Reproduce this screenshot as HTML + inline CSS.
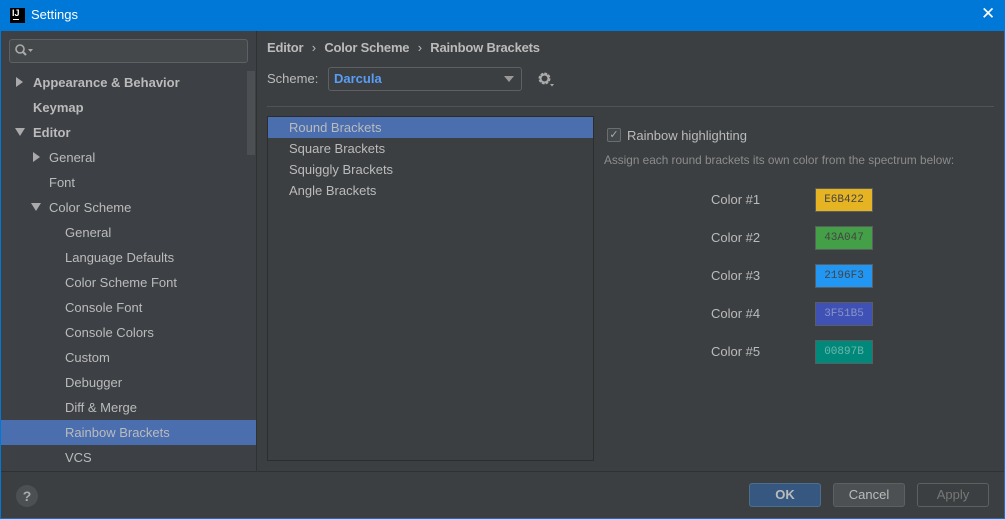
<!DOCTYPE html>
<html><head><style>
*{margin:0;padding:0;box-sizing:border-box}
body{width:1005px;height:519px;overflow:hidden;background:#0078d7;font-family:"Liberation Sans",sans-serif;font-size:13px;color:#bbbbbb;position:relative}
.a{position:absolute}
.row{position:absolute;left:1px;width:255px;height:25px;line-height:25px;white-space:nowrap}
.b{font-weight:bold}
.tri{position:absolute;width:0;height:0}
.tr{border-top:5px solid transparent;border-bottom:5px solid transparent;border-left:7px solid #aaa}
.td{border-left:5px solid transparent;border-right:5px solid transparent;border-top:8px solid #aaa}
.sw{position:absolute;left:815px;width:58px;height:24px;border:1px solid #5a5d60;font-family:"Liberation Mono",monospace;font-size:11px;text-align:center;line-height:22px;color:#444}
.cl{position:absolute;left:711px;font-size:13px}
.btn{position:absolute;top:483px;height:24px;border-radius:3px;text-align:center;line-height:22px;font-size:13px}
</style></head><body>
<div class="a" style="left:0;top:0;width:1005px;height:31px;background:#0078d7"></div>
<div class="a" style="left:10px;top:8px;width:15px;height:15px;background:#000"><div class="a" style="left:2px;top:0;color:#fff;font-size:9px;font-weight:bold">IJ</div><div class="a" style="left:3px;top:11px;width:6px;height:1px;background:#fff"></div></div>
<div class="a" style="left:31px;top:7px;color:#fff;font-size:13px">Settings</div>
<div class="a" style="left:981px;top:4px;color:#fff;font-size:17px">✕</div>
<div class="a" style="left:1px;top:31px;width:255px;height:440px;background:#3d4044"></div>
<div class="a" style="left:256px;top:31px;width:1px;height:440px;background:#2f3133"></div>
<div class="a" style="left:257px;top:31px;width:747px;height:440px;background:#3c3f41"></div>
<div class="a" style="left:9px;top:39px;width:239px;height:24px;border:1px solid #5e6163;border-radius:3px;background:#45484a"></div>
<svg class="a" style="left:14px;top:43px" width="20" height="16"><circle cx="6" cy="6" r="4" fill="none" stroke="#aaa" stroke-width="1.6"/><line x1="9" y1="9" x2="12" y2="12" stroke="#aaa" stroke-width="2"/><path d="M14 6h5l-2.5 3z" fill="#aaa"/></svg>
<div class="a" style="left:247px;top:71px;width:8px;height:84px;background:#4d5053"></div>
<div class="row b" style="top:70px;padding-left:32px">Appearance &amp; Behavior</div><div class="tri tr" style="left:16px;top:77px"></div>
<div class="row b" style="top:95px;padding-left:32px">Keymap</div>
<div class="row b" style="top:120px;padding-left:32px">Editor</div><div class="tri td" style="left:15px;top:128px"></div>
<div class="row" style="top:145px;padding-left:48px">General</div><div class="tri tr" style="left:33px;top:152px"></div>
<div class="row" style="top:170px;padding-left:48px">Font</div>
<div class="row" style="top:195px;padding-left:48px">Color Scheme</div><div class="tri td" style="left:31px;top:203px"></div>
<div class="row" style="top:220px;padding-left:64px">General</div>
<div class="row" style="top:245px;padding-left:64px">Language Defaults</div>
<div class="row" style="top:270px;padding-left:64px">Color Scheme Font</div>
<div class="row" style="top:295px;padding-left:64px">Console Font</div>
<div class="row" style="top:320px;padding-left:64px">Console Colors</div>
<div class="row" style="top:345px;padding-left:64px">Custom</div>
<div class="row" style="top:370px;padding-left:64px">Debugger</div>
<div class="row" style="top:395px;padding-left:64px">Diff &amp; Merge</div>
<div class="row" style="top:420px;padding-left:64px;background:#4b6eaf">Rainbow Brackets</div>
<div class="row" style="top:445px;padding-left:64px">VCS</div>
<div class="a b" style="left:267px;top:40px;white-space:nowrap;letter-spacing:-0.2px">Editor <span style="font-weight:normal;margin:0 5px">›</span> Color Scheme <span style="font-weight:normal;margin:0 5px">›</span> Rainbow Brackets</div>
<div class="a" style="left:267px;top:71px">Scheme:</div>
<div class="a" style="left:328px;top:67px;width:194px;height:24px;border:1px solid #5e6163;border-radius:3px;background:#3c3f41"></div>
<div class="a b" style="left:334px;top:71px;color:#589df6">Darcula</div>
<div class="a" style="left:504px;top:76px;width:0;height:0;border-left:5px solid transparent;border-right:5px solid transparent;border-top:6px solid #999"></div>
<svg class="a" style="left:537px;top:71px" width="18" height="17"><circle cx="7.5" cy="7.5" r="4.5" fill="none" stroke="#aaa" stroke-width="3" stroke-dasharray="2.4 1.1"/><circle cx="7.5" cy="7.5" r="4" fill="none" stroke="#aaa" stroke-width="2"/><path d="M13 13h4l-2 2.5z" fill="#aaa"/></svg>
<div class="a" style="left:267px;top:106px;width:727px;height:1px;background:#515456"></div>
<div class="a" style="left:267px;top:116px;width:327px;height:345px;border:1px solid #2b2d2f;background:#3c3f41"></div>
<div class="a" style="left:268px;top:117px;width:325px;height:21px;background:#4b6eaf"></div>
<div class="a" style="left:289px;top:120px">Round Brackets</div>
<div class="a" style="left:289px;top:141px">Square Brackets</div>
<div class="a" style="left:289px;top:162px">Squiggly Brackets</div>
<div class="a" style="left:289px;top:183px">Angle Brackets</div>
<div class="a" style="left:607px;top:128px;width:14px;height:14px;border:1px solid #6b6e70;border-radius:2px;background:#43494a;color:#aaa;font-size:11px;line-height:12px;text-align:center">✓</div>
<div class="a" style="left:627px;top:128px">Rainbow highlighting</div>
<div class="a" style="left:604px;top:153px;font-size:11.8px;color:#8c8c8c">Assign each round brackets its own color from the spectrum below:</div>
<div class="cl" style="top:192px">Color #1</div><div class="sw" style="top:188px;background:#e6b422">E6B422</div>
<div class="cl" style="top:230px">Color #2</div><div class="sw" style="top:226px;background:#43a047">43A047</div>
<div class="cl" style="top:268px">Color #3</div><div class="sw" style="top:264px;background:#2196f3">2196F3</div>
<div class="cl" style="top:306px">Color #4</div><div class="sw" style="top:302px;background:#3f51b5;color:#8a93c8">3F51B5</div>
<div class="cl" style="top:344px">Color #5</div><div class="sw" style="top:340px;background:#00897b;color:#6fb5ab">00897B</div>
<div class="a" style="left:1px;top:471px;width:1003px;height:1px;background:#2f3133"></div>
<div class="a" style="left:1px;top:472px;width:1003px;height:46px;background:#3c3f41"></div>
<div class="a" style="left:16px;top:485px;width:22px;height:22px;border-radius:50%;background:#4d5052;color:#aaa;text-align:center;line-height:22px;font-weight:bold;font-size:14px">?</div>
<div class="btn b" style="left:749px;width:72px;background:#365880;border:1px solid #4c708c;color:#bbb">OK</div>
<div class="btn" style="left:833px;width:72px;background:#4c5052;border:1px solid #5e6060">Cancel</div>
<div class="btn" style="left:917px;width:72px;border:1px solid #5e6060;color:#777">Apply</div>
</body></html>
